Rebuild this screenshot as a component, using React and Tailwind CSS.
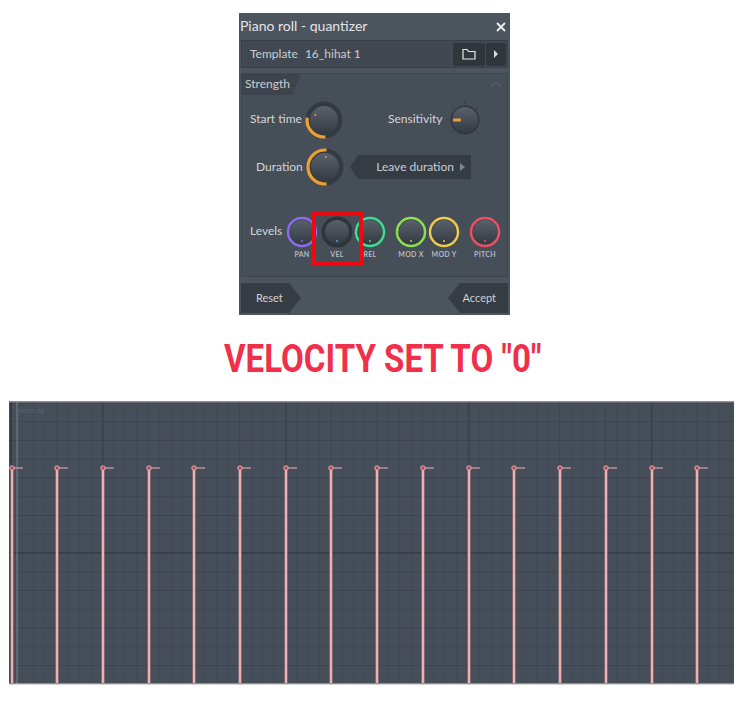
import { useId } from "react";

const LEVELS = [
  { label: "PAN", color: "#8a6cf0", dot: "#8a6cf0", gap: "ml-0" },
  { label: "VEL", color: null, dot: "#4aa8e0", gap: "ml-[3px]" },
  { label: "REL", color: "#3fdc90", dot: "#3fdc90", gap: "ml-[1px]" },
  { label: "MOD X", color: "#8ae052", dot: "#8ae052", gap: "ml-[9px]" },
  { label: "MOD Y", color: "#eccb4e", dot: "#eccb4e", gap: "ml-[1px]" },
  { label: "PITCH", color: "#ee4f62", dot: "#ee4f62", gap: "ml-[9px]" },
];

const NOTE_XS = [3, 48, 94, 140, 185, 231, 277, 322, 368, 414, 460, 505, 551, 597, 643, 688];

function polar(cx, cy, r, deg) {
  const a = ((deg - 90) * Math.PI) / 180;
  return [cx + r * Math.cos(a), cy + r * Math.sin(a)];
}

function arc(cx, cy, r, from, to) {
  const [x1, y1] = polar(cx, cy, r, from);
  const [x2, y2] = polar(cx, cy, r, to);
  return `M${x1} ${y1}A${r} ${r} 0 ${to - from > 180 ? 1 : 0} 1 ${x2} ${y2}`;
}

function KnobFace({ c, r }) {
  const id = useId();
  return (
    <>
      <defs>
        <linearGradient id={id} x1="0" y1="0" x2="0" y2="1">
          <stop offset="0" stopColor="#59616c" />
          <stop offset="1" stopColor="#343a41" />
        </linearGradient>
      </defs>
      <circle cx={c} cy={c} r={r} fill={`url(#${id})`} />
    </>
  );
}

function ArcKnob({ from, to, dotDeg }) {
  const c = 20;
  const [dx, dy] = polar(c, c, 10, dotDeg);
  return (
    <svg width="40" height="40" viewBox="0 0 40 40" className="shrink-0">
      <circle cx={c} cy={c} r="18.5" fill="#343a42" />
      <path d={arc(c, c, 17, from, to)} fill="none" stroke="#eda032" strokeWidth="3.2" />
      <KnobFace c={c} r={14} />
      <circle cx={dx} cy={dy} r="1" fill="#eda032" />
    </svg>
  );
}

function SensitivityKnob() {
  const c = 20;
  const ticks = [225, 270, 315, 0, 45, 90, 135];
  return (
    <svg width="40" height="40" viewBox="0 0 40 40" className="shrink-0">
      {ticks.map((deg) => {
        const [x1, y1] = polar(c, c, 16, deg);
        const [x2, y2] = polar(c, c, 19, deg);
        return <line key={deg} x1={x1} y1={y1} x2={x2} y2={y2} stroke="#363c44" strokeWidth="1" />;
      })}
      <circle cx={c} cy={c} r="14.5" fill="#31363d" />
      <KnobFace c={c} r={13} />
      <rect x="8" y="18.6" width="8" height="2.8" rx="1" fill="#eda032" />
    </svg>
  );
}

function LevelKnob({ color, dot }) {
  const c = 16;
  return (
    <svg width="32" height="32" viewBox="0 0 32 32" className="shrink-0">
      {color ? (
        <circle cx={c} cy={c} r="14" fill="#3a4149" stroke={color} strokeWidth="2.5" />
      ) : (
        <circle cx={c} cy={c} r="15.5" fill="#2f343b" />
      )}
      <KnobFace c={c} r={12} />
      <circle cx={c} cy={25} r="1" fill={dot} />
    </svg>
  );
}

function NoteChart() {
  const vertical = [];
  for (let x = 2; x < 725; x += 11.43) vertical.push(x);
  const horizontal = [];
  for (let y = 2; y < 284; y += 18.75) horizontal.push(y);

  return (
    <svg width="725" height="284" viewBox="0 0 725 284" className="block">
      <rect width="725" height="284" fill="#464e59" />
      {vertical.map((x, i) => (
        <line key={x} x1={x} y1="0" x2={x} y2="283" stroke="#3b424c" strokeOpacity={i % 4 === 0 ? 0.6 : 0.35} />
      ))}
      {horizontal.map((y, i) => (
        <line key={y} x1="0" y1={y} x2="725" y2={y} stroke="#3b424c" strokeOpacity={i % 2 === 0 ? 0.75 : 0.5} />
      ))}
      {[94, 277, 460, 643].map((x) => (
        <line key={x} x1={x} y1="0" x2={x} y2="283" stroke="#383f48" />
      ))}
      <line x1="0" y1="152" x2="725" y2="152" stroke="#333941" />
      <line x1="2" y1="0" x2="2" y2="283" stroke="#2a2f36" />
      <line x1="8" y1="0" x2="8" y2="283" stroke="#7b838d" />
      <rect width="725" height="1.5" fill="#8b9096" />
      <rect y="282.5" width="725" height="1.5" fill="#d5d6d8" />
      <text x="8" y="12" fontSize="8" fill="#5a626d" fontFamily="Lato, sans-serif">
        Velocity
      </text>
      {NOTE_XS.map((x) => (
        <g key={x}>
          <line x1={x} y1="67" x2={x} y2="282" stroke="#f2aeb0" strokeWidth="2.6" />
          <line x1={x} y1="67" x2={x + 11} y2="67" stroke="#ecb4b5" strokeWidth="1" />
          <circle cx={x} cy="67" r="2.2" fill="#a54a55" stroke="#f2aeb0" strokeWidth="1" />
        </g>
      ))}
    </svg>
  );
}

export default function App() {
  return (
    <div className="relative h-[708px] w-[750px] overflow-hidden bg-white font-['Lato',sans-serif]">
      <div className="ml-[239px] mt-[13px] flex h-[302px] w-[271px] flex-col bg-[#4c545e] px-[2px]">
        <div className="flex h-[27px] shrink-0 items-center justify-between pr-[2px]">
          <span className="-ml-[1px] mb-[2px] text-[14px] text-[#e2e5e8]">Piano roll - quantizer</span>
          <svg width="10" height="10" viewBox="0 0 10 10">
            <path d="M1 1l8 8M9 1l-8 8" stroke="#eef0f2" strokeWidth="1.8" />
          </svg>
        </div>

        <div className="flex h-[28px] shrink-0 items-center border border-[#3a4048] bg-[#414851] pl-[8px] pr-[1px] text-[12px] text-[#c9cdd2]">
          <span>Template</span>
          <span className="ml-[7px]">16_hihat 1</span>
          <div className="ml-auto flex h-[23px] gap-[1px]">
            <div className="flex w-[32px] items-center justify-center rounded-[2px] bg-[#31363d]">
              <svg width="14" height="12" viewBox="0 0 14 12">
                <path d="M1 1.5h4l1.5 2H13V11H1z" fill="none" stroke="#e6e8ea" strokeWidth="1.2" />
              </svg>
            </div>
            <div className="flex w-[20px] items-center justify-center rounded-[2px] bg-[#31363d]">
              <svg width="6" height="8" viewBox="0 0 6 8">
                <path d="M1 0l4 4-4 4z" fill="#d8dbde" />
              </svg>
            </div>
          </div>
        </div>

        <div className="mt-[5px] h-[204px] shrink-0 border border-[#3f464e] bg-[#464e58]">
          <div className="flex h-[21px] items-start justify-between">
            <div className="flex h-[21px] w-[59px] items-center bg-[#3d444d] pb-[1px] pl-[3px] text-[12px] text-[#c9cdd2] [clip-path:polygon(0_0,100%_0,85%_100%,0_100%)]">
              Strength
            </div>
            <svg width="12" height="7" viewBox="0 0 12 7" className="mr-[5px] mt-[7px]">
              <path d="M1 6l5-5 5 5" fill="none" stroke="#59616b" strokeWidth="1.2" />
            </svg>
          </div>

          <div className="mt-[5px] flex h-[40px] items-center text-[12px] text-[#d3d6da]">
            <span className="mb-[3px] ml-[8px] w-[54px]">Start time</span>
            <ArcKnob from={175} to={278} dotDeg={300} />
            <span className="mb-[3px] ml-[44px] w-[57px]">Sensitivity</span>
            <SensitivityKnob />
          </div>

          <div className="mt-[7px] flex h-[40px] items-center text-[12px] text-[#d3d6da]">
            <span className="ml-[14px] w-[49px]">Duration</span>
            <ArcKnob from={175} to={365} dotDeg={5} />
            <div className="ml-[5px] flex h-[24px] w-[121px] items-center justify-end gap-[6px] bg-[#363c44] pr-[6px] [clip-path:polygon(8px_0,100%_0,100%_100%,8px_100%,0_50%)]">
              <span className="text-[#c9cdd2]">Leave duration</span>
              <svg width="5" height="8" viewBox="0 0 5 8">
                <path d="M0 0l5 4-5 4z" fill="#7d848c" />
              </svg>
            </div>
          </div>

          <div className="mt-[29px] flex items-start text-[12px] text-[#d3d6da]">
            <span className="ml-[8px] mt-[6px] w-[36px]">Levels</span>
            <div className="flex">
              {LEVELS.map((level) => (
                <div key={level.label} className={`flex w-[32px] flex-col items-center ${level.gap}`}>
                  <LevelKnob color={level.color} dot={level.dot} />
                  <span className="mt-[1px] whitespace-nowrap text-[7px] font-bold tracking-[0.3px] text-[#b4b9bf]">
                    {level.label}
                  </span>
                </div>
              ))}
            </div>
          </div>
        </div>

        <div className="mt-[6px] flex h-[30px] shrink-0 justify-between text-[11px] text-[#cfd2d6]">
          <div className="flex w-[60px] items-center bg-[#363c44] pl-[15px] [clip-path:polygon(0_0,80%_0,100%_50%,80%_100%,0_100%)]">
            Reset
          </div>
          <div className="flex w-[60px] items-center justify-end bg-[#363c44] pr-[12px] [clip-path:polygon(20%_0,100%_0,100%_100%,20%_100%,0_50%)]">
            Accept
          </div>
        </div>
      </div>

      <h1 className="mt-[22px] ml-[224px] w-[330px] origin-left scale-x-[0.87] whitespace-nowrap font-['Roboto',sans-serif] text-[38px] font-bold leading-[44px] text-[#f0304b]">
        VELOCITY SET TO "0"
      </h1>

      <div className="ml-[9px] mt-[20px]">
        <NoteChart />
      </div>

      <div className="absolute left-[312px] top-[211px] h-[54px] w-[51px] border-[4px] border-[#ee0a10]" />
    </div>
  );
}
